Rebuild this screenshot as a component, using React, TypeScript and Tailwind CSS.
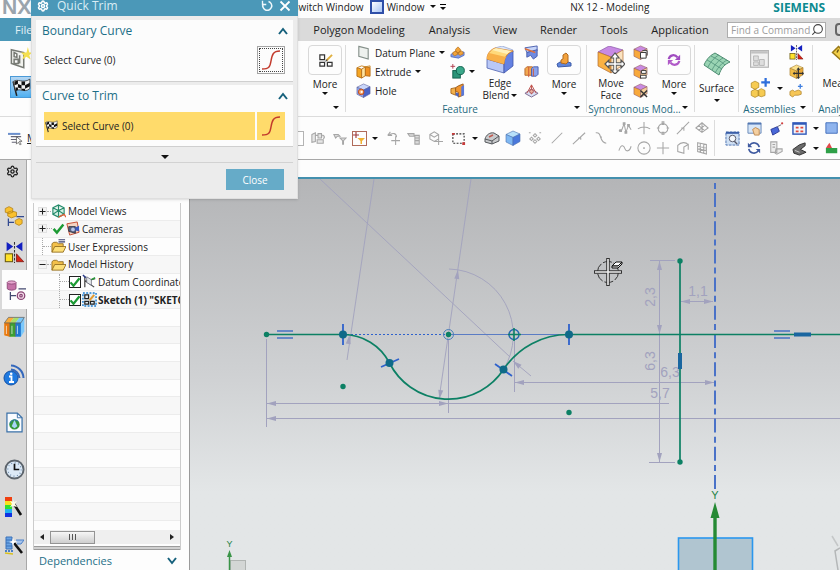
import React from "react";
import { Settings, Search } from "lucide-react";

type Kids = { children?: React.ReactNode };

const Ico = ({ s = "size-[15px]", children }: Kids & { s?: string }) => (
  <svg viewBox="0 0 16 16" className={`${s} shrink-0`} fill="none" aria-hidden="true">
    {children}
  </svg>
);

const Caret = ({ big = false }: { big?: boolean }) => (
  <svg viewBox="0 0 8 4" className={big ? "h-1 w-2 shrink-0" : "h-[3px] w-[6px] shrink-0"} aria-hidden="true">
    <path d="M0 0H8L4 4Z" fill="#111" />
  </svg>
);

const Cube = ({ top, left, right, line = "#5a5f9c" }: { top: string; left: string; right: string; line?: string }) => (
  <g stroke={line} strokeWidth=".6" strokeLinejoin="round">
    <path d="M1 4.500 8 1 15 4 8 7.500Z" fill={top} />
    <path d="M1 4.500 8 7.500V15.500L1 12Z" fill={left} />
    <path d="M8 7.500 15 4V11.500L8 15.500Z" fill={right} />
  </g>
);

/* ---------- ribbon icons ---------- */

const MoreSketchIcon = () => (
  <Ico s="size-[15px]">
    <path d="M2 2H7V7H2ZM2 10H7V14H2ZM10 10H15V14H10Z" stroke="#333" strokeWidth="1.300" />
    <path d="M9 8 15 2" stroke="#e0b040" strokeWidth="2" />
    <path d="M8 9 10 7" stroke="#444" strokeWidth="1.200" />
  </Ico>
);
const DatumPlaneIcon = () => (
  <Ico>
    <path d="M3 1.500 13 4V15L3 12Z" fill="#eef1ee" stroke="#85908a" strokeWidth="1.200" />
  </Ico>
);
const ExtrudeIcon = () => (
  <Ico>
    <path d="M1 4 6 5.500V15L1 13Z" fill="#f5a623" stroke="#b8701a" />
    <path d="M6 5.500 10 3V12.500L6 15Z" fill="#fde3a0" stroke="#b8701a" />
    <path d="M10 3 15 4V13L10 12.500Z" fill="#f09020" stroke="#b8701a" />
    <path d="M1 4 6 2 10 3 15 2V4" stroke="#c98320" />
  </Ico>
);
const HoleIcon = () => (
  <Ico>
    <Cube top="#c9d6fa" left="#8fa8ee" right="#4a64c8" />
    <circle cx="5.500" cy="9.500" r="3" fill="#f0a060" stroke="#c04a20" />
    <circle cx="6" cy="9.500" r="1.200" fill="#fff" />
  </Ico>
);
const PatternIcon = () => (
  <Ico>
    <path d="M1 10 6 7 15 7.500V11L9 14 1 12.500Z" fill="#7f9ae8" stroke="#4560b8" strokeWidth=".8" />
    <path d="M3 8 6 6.500 8 8V10L5 11.500 3 10ZM9 8 12 6 14 8V9.500L11 11 9 10ZM6 4.500 8.500 2 11 4.500V7L8.500 8.500 6 7Z" fill="#f2a43a" stroke="#b87420" strokeWidth=".8" />
  </Ico>
);
const UniteIcon = () => (
  <Ico>
    <path d="M3 0V5M.5 2.500H5.500" stroke="#b04050" />
    <rect x="3" y="7" width="8" height="8" fill="#2a9478" stroke="#0f5f4c" />
    <circle cx="11" cy="7" r="4.300" fill="#3aa88a" stroke="#0f5f4c" />
  </Ico>
);
const ShellIcon = () => (
  <Ico>
    <path d="M1 6 6 5V13L1 11Z" fill="#f2b04a" stroke="#a86a20" />
    <path d="M6 5 9 3 14 1V13L9 15V10L6 9Z" fill="#f0952e" stroke="#9a5d20" />
    <path d="M12 4 15 2V13L12 14Z" fill="#5a78d8" />
    <path d="M6 10 9 11V15L6 13Z" fill="#4a64c0" />
  </Ico>
);
const EdgeBlendIcon = () => (
  <svg viewBox="0 0 28 28" className="size-7" aria-hidden="true">
    <path d="M9 2 16 0 27 4V6L20 9Z" fill="#dce8fc" stroke="#7d8fc4" strokeWidth=".6" />
    <path d="M1 13 18 18V27L1 22Z" fill="#b9c8f7" stroke="#4e62b0" strokeWidth=".8" />
    <path d="M18 18C18 12 21 7 27 5V20L18 27Z" fill="#6481e2" stroke="#4156a8" strokeWidth=".8" />
    <path d="M1 13C1 8 4 4 9 2L27 5C21 7 18 12 18 18Z" fill="#ffd97a" stroke="#d8812a" strokeWidth=".9" />
    <path d="M1 13C1 11 2 8 3 7L20 11C19 13 18 15 18 18Z" fill="#f8b048" />
    <path d="M10 2 26 5C24 6 22 7 21 8L6 4Z" fill="#fff0b8" />
  </svg>
);
const ChamferIcon = () => (
  <Ico>
    <path d="M1 3 14 1V6L3 8Z" fill="#c8d6fa" stroke="#4a5fae" />
    <path d="M3 8 14 5V12L10 15 7 11 3 13Z" fill="#6f8ae0" stroke="#4a5fae" />
    <path d="M1 4 12 8" stroke="#e0703a" strokeWidth="1.500" />
  </Ico>
);
const TrimBodyIcon = () => (
  <Ico>
    <path d="M1 5 3 3H9V12H1Z" fill="#f2a850" stroke="#b86a30" />
    <path d="M8 5 10 3H15V11L13 13H8Z" fill="#89a2ec" stroke="#4a5fae" />
    <path d="M5 3V14M10 5V13" stroke="#d05a3a" />
  </Ico>
);
const DraftIcon = () => (
  <Ico>
    <path d="M1 11 8 6 15 11 8 15Z" fill="#d8dff5" stroke="#7a6a90" />
    <path d="M8 2V12M8 2 3 11M8 2 13 11" stroke="#c0504a" />
    <circle cx="8" cy="9" r="2" fill="#e8b0a0" stroke="#b05050" />
  </Ico>
);
const FeatureMoreIcon = () => (
  <Ico s="size-4">
    <path d="M1 12 4 10H12L15 11V14L2 15Z" fill="#5f86dc" stroke="#3f5ca8" />
    <path d="M5 11V8L7 7V3L10 1 12 3V10L10 12Z" fill="#f3a23c" stroke="#b06a20" />
  </Ico>
);
const MoveFaceIcon = () => (
  <svg viewBox="0 0 28 28" className="size-7" aria-hidden="true">
    <g stroke="#b06a30" strokeWidth=".7">
      <path d="M1 6 12 0 26 4 14 11Z" fill="#c88ae4" stroke="#8a58a8" />
      <path d="M1 6 14 11V27L1 20Z" fill="#f9b143" />
      <path d="M14 11 26 4V19L14 27Z" fill="#fbe3c0" />
    </g>
    <path d="M18 10V26M10 18H26" stroke="#555" strokeWidth="3.400" />
    <path d="M18 7 14 12H22ZM18 28 14 24H22ZM8 18 12 14V22ZM28 18 24 14V22Z" fill="#fff" stroke="#555" strokeWidth="1.200" />
    <path d="M18 11V25M11 18H25" stroke="#fff" strokeWidth="1.600" />
  </svg>
);
const SyncCube = ({ children }: Kids) => (
  <Ico>
    <Cube top="#c98ae0" left="#f8a93c" right="#f6cf9c" line="#8f5a60" />
    {children}
  </Ico>
);
const RefreshIcon = () => (
  <Ico s="size-[14px]">
    <path d="M2 7C3 2 9 1 12 5" stroke="#a04cc0" strokeWidth="2.600" />
    <path d="M15 2V8H9Z" fill="#a04cc0" />
    <path d="M14 9C13 14 7 15 4 11" stroke="#b05ac8" strokeWidth="2.600" />
    <path d="M1 14V8H7Z" fill="#b05ac8" />
  </Ico>
);
const SurfaceIcon = () => (
  <svg viewBox="0 0 28 24" className="h-6 w-7" fill="none" aria-hidden="true">
    <path d="M1 13C4 6 8 3 12 1L27 10C22 12 18 16 16 23 11 20 6 16 1 13Z" fill="#9ad4b4" stroke="#4c8a70" />
    <path d="M4 8C10 11 15 15 19 17M8 4C14 7 19 10 22 13M5 15C8 9 12 5 16 3M9 18C12 12 16 8 20 6M12 21C16 14 19 11 24 8" stroke="#4f9078" strokeWidth=".8" />
  </svg>
);
const AsmWindowIcon = () => (
  <Ico s="size-[19px]">
    <rect x=".5" y=".5" width="15" height="14" fill="#f1f1f1" stroke="#b5b5b5" />
    <path d="M1 2H15" stroke="#c2c2c2" strokeWidth="2" />
    <path d="M3 5H7V9H3ZM3 10H7V13H3ZM8 8H12V13H8Z" fill="#dedede" stroke="#b0b0b0" strokeWidth=".7" />
  </Ico>
);
const AsmAddIcon = () => (
  <Ico s="size-5">
    <path d="M1 4 4 2.500 7 4V7.500L4 9 1 7.500ZM1 10.500 4 9 7 10.500V14L4 15.500 1 14ZM6.500 10 9 8.500 12 10V14L9 15 6.500 14Z" fill="#f6cb52" stroke="#b08a28" strokeWidth=".6" />
    <path d="M12.500 0V7M9 3.500H16" stroke="#2f6fdc" strokeWidth="1.800" />
  </Ico>
);
const MirrorAsmIcon = ({ s = "size-[15px]" }: { s?: string }) => (
  <Ico s={s}>
    <path d="M2 0 7 3.500 2 7ZM14 0 9 3.500 14 7Z" fill="#1420c0" />
    <path d="M8 0V16" stroke="#333" strokeWidth=".8" strokeDasharray="2 1" />
    <rect x="1" y="9" width="5.500" height="6" fill="#ffe22a" stroke="#6a5a10" strokeWidth=".8" />
    <path d="M9.500 9 15 15H9.500Z" fill="#d82414" stroke="#7a1410" strokeWidth=".6" />
  </Ico>
);
const MoveCompIcon = () => (
  <Ico>
    <Cube top="#fbe08a" left="#f3bd48" right="#e8a83a" line="#a0782a" />
    <path d="M10 5V15M5 10H15" stroke="#333" strokeWidth="1.300" />
    <path d="M10 3.500 8 6H12ZM10 16 8 14H12ZM4 10 6 8V12ZM16 10 14 8V12Z" fill="#333" />
  </Ico>
);
const PatternCompIcon = () => (
  <Ico>
    <path d="M1 9 4 7.500 6 9 10 7.500 13 9V12L10 13 6 13 4 15 1 13Z" fill="#f6c656" stroke="#b08630" strokeWidth=".8" />
    <path d="M12 1V6M9.500 3.500H14.500" stroke="#3f7fe0" strokeWidth="1.400" />
  </Ico>
);
const MeasureIcon = () => (
  <Ico s="size-6">
    <path d="M1 5 5 1 16 11 12 15Z" fill="#f2cf4a" stroke="#9a7a18" />
    <path d="M5 3 4 5M8 5.500 6.500 7M11 8 9.500 10" stroke="#6a5410" />
  </Ico>
);

/* ---------- navigator icons ---------- */

const FolderIcon = ({ eq = false }: { eq?: boolean }) => (
  <Ico>
    <path d="M1 14V5L3 3.500H6L8 5H13V8" fill="#f3c04a" stroke="#8e6a1c" strokeWidth=".9" />
    <path d="M1 14 4 8H16L13 14Z" fill="#fddf78" stroke="#8e6a1c" strokeWidth=".9" />
    {eq && <path d="M8 .8H15M8 3H15" stroke="#3a3f6c" strokeWidth="1.200" />}
  </Ico>
);
const ViewsIcon = () => (
  <Ico>
    <path d="M2 4 8 1 14 4V11L8 14 2 11ZM2 4 8 7 14 4M8 7V14M2 11 8 7 14 11M8 1V7" stroke="#238a6a" strokeWidth="1.200" fill="#d6efe4" />
    <path d="M8 14 14 11 16 14" stroke="#e0603a" strokeWidth="1.400" />
  </Ico>
);
const CameraIcon = () => (
  <Ico>
    <path d="M2 3 13 1 15 12 5 15Z" fill="#f4d4c4" stroke="#c44a30" />
    <path d="M4 6H11V13L4 11Z" fill="#5a6480" stroke="#30364a" />
    <circle cx="8.500" cy="9" r="2" fill="#b8c4e8" />
    <path d="M11 7 15 5V11L11 10Z" fill="#3a58c0" />
  </Ico>
);
const CheckIcon = ({ s = "size-[13px]" }: { s?: string }) => (
  <Ico s={s}>
    <path d="M2 8.500 6 13 14 3" stroke="#1c9a34" strokeWidth="3" />
  </Ico>
);
const CsysIcon = () => (
  <Ico>
    <path d="M3 14V2M3 7 13 14M3 8 14 5" stroke="#444" strokeWidth="1.300" />
    <path d="M5 3 10 6V12L5 9Z" fill="#e6eaec" stroke="#667" strokeWidth=".8" />
    <path d="M10 6 14 4" stroke="#2a9a3a" strokeWidth="1.600" />
    <path d="M1 1 4 4" stroke="#2a3a88" strokeWidth="1.600" />
  </Ico>
);
const SketchIcon = () => (
  <Ico>
    <rect x="1" y="1" width="14" height="14" stroke="#1f7fd0" strokeWidth="1.600" strokeDasharray="2 1.500" fill="#e4eef6" />
    <path d="M3 3H7V7H3ZM3 10H7V13H3ZM9 10H13V13H9Z" stroke="#222" strokeWidth="1.300" />
    <path d="M8 9 13 3" stroke="#e29a30" strokeWidth="2.200" />
  </Ico>
);

/* ---------- resource bar icons ---------- */

const AsmNavIcon = () => (
  <Ico s="size-5">
    <path d="M1 2 4 .5 7 2V5L4 6 1 5ZM3 5 6 4 10 5V8L6 9.500 3 8Z" fill="#f9c02e" stroke="#b07f14" strokeWidth=".6" />
    <path d="M10 8.500H16M3.500 10V16M3.500 13H8" stroke="#334a90" />
    <path d="M9 11.500 12 10 14.500 11V14L12 15.500 9 14Z" fill="#f9c02e" stroke="#b07f14" strokeWidth=".6" />
  </Ico>
);
const PartNavIcon = () => (
  <Ico s="size-5">
    <path d="M1 2V7C2 8.500 7 8.500 8 7V2" fill="#c673a8" stroke="#8a4474" strokeWidth=".7" />
    <ellipse cx="4.500" cy="2" rx="3.500" ry="1.300" fill="#e8a8d0" stroke="#8a4474" strokeWidth=".7" />
    <path d="M10 7H16M3.500 9.500V16M3.500 12.500H8" stroke="#444a70" />
    <circle cx="12" cy="12.500" r="3" fill="#f2dbe8" stroke="#8a4474" />
    <circle cx="12" cy="12.500" r="1" stroke="#8a4474" />
  </Ico>
);
const BooksIcon = () => (
  <Ico s="size-[22px]">
    <path d="M1 5 4 1H8L5 5V15L1 14Z" fill="#f9ac3a" />
    <path d="M1 5H5V15L1 14Z" fill="#e87810" />
    <path d="M5 5 8 1H12L9 5V15H5Z" fill="#a8de6a" />
    <path d="M5 5H9V15H5Z" fill="#3ca030" />
    <path d="M9 5 12 1H15.500V11L13 15H9Z" fill="#7cc8fa" />
    <path d="M9 5H13V15H9Z" fill="#1f78d0" />
    <path d="M2.500 7V13M6.500 7V13M10.500 7V13" stroke="#fff" strokeWidth=".8" opacity=".6" />
    <path d="M1 5 4 1H15.500L13 5ZM5 5V15M9 5V15" stroke="#5a5a5a" strokeWidth=".5" />
  </Ico>
);
const InfoIcon = () => (
  <svg viewBox="0 0 22 22" className="size-[22px]" fill="none" aria-hidden="true">
    <path d="M8 5.500A9 9 0 0 1 16.500 14M8 1.500A13 13 0 0 1 20.500 14" stroke="#3468bc" strokeWidth="2" />
    <circle cx="8" cy="14" r="7" fill="#1f7ae0" stroke="#1450a4" />
    <path d="M6 12.500H8.500V17.500M6 18H11" stroke="#fff" strokeWidth="1.800" />
    <circle cx="8.200" cy="9.700" r="1.300" fill="#fff" />
  </svg>
);
const DocIcon = () => (
  <svg viewBox="0 0 18 22" className="h-[21px] w-[17px]" fill="none" aria-hidden="true">
    <path d="M1 1H12L17 6V21H1Z" fill="#fafcff" stroke="#3a70a8" strokeWidth="1.300" />
    <path d="M12 1V6H17" stroke="#3a70a8" />
    <circle cx="9" cy="13" r="5.500" fill="#35983c" />
    <path d="M9 8 12 15 9 17 6 15Z" fill="#a8d4f6" />
    <path d="M4 12C6 8 10 7 13 10" stroke="#2b6cc0" />
  </svg>
);
const ClockIcon = () => (
  <svg viewBox="0 0 22 22" className="size-[21px]" fill="none" aria-hidden="true">
    <circle cx="11" cy="11" r="9.500" fill="#dce9f6" stroke="#5c646c" strokeWidth="2" />
    <circle cx="11" cy="11" r="7" stroke="#6a88a8" strokeWidth="1.200" strokeDasharray="1 2.660" />
    <path d="M11 5V11H16" stroke="#111" strokeWidth="1.800" />
  </svg>
);
const RolesIcon = () => (
  <svg viewBox="0 0 20 20" className="size-5" fill="none" aria-hidden="true">
    <path d="M1 0H8V4H1Z" fill="#f04010" />
    <path d="M1 4H8V8H1Z" fill="#f8e020" />
    <path d="M1 8H8V12H1Z" fill="#30e030" />
    <path d="M1 12H8V16H1Z" fill="#20b0f0" />
    <path d="M1 16H8V20H1Z" fill="#1030e0" />
    <path d="M10 7 17 18" stroke="#111" strokeWidth="2.600" />
    <path d="M9 2 10 5 13 4 11 7 13 10 9 9 6 10 8 7 6 4 9 5Z" fill="#fffde8" />
  </svg>
);
const SceneIcon = () => (
  <svg viewBox="0 0 20 20" className="size-5" fill="none" aria-hidden="true">
    <path d="M2 2H8V14H2ZM2 5H8M2 8H8M2 11H8" fill="#6aa4e4" stroke="#3a70b8" />
    <path d="M1 16H10" stroke="#4a80c8" strokeWidth="2" strokeDasharray="2 1" />
    <path d="M12 5H20L17 9H13" fill="#a8c4ec" stroke="#4a80c8" />
    <path d="M1 18 9 19" stroke="#d8c020" strokeWidth="1.500" />
    <path d="M10 8 18 18" stroke="#111" strokeWidth="2.600" />
    <path d="M9 3 10 6 13 6 10 8 9 11 8 8 5 7 8 6Z" fill="#fff" />
  </svg>
);

/* ---------- ribbon parts ---------- */

const Tool = ({ icon, label, caret = false, name }: { icon: React.ReactNode; label?: string; caret?: boolean; name?: string }) => (
  <button aria-label={label ?? name} className="flex h-[19px] items-center gap-1 whitespace-nowrap">
    {icon}
    {label && <span>{label}</span>}
    {caret && <Caret />}
  </button>
);

const More = ({ icon }: { icon: React.ReactNode }) => (
  <button className="flex w-[34px] shrink-0 flex-col items-center pt-1">
    <span className="flex h-[30px] w-full items-center justify-center rounded-sm border border-[#d9d9d9] bg-[#fdfdfd]">{icon}</span>
    <span className="mt-px leading-4">More</span>
    <Caret />
  </button>
);

const Big = ({ icon, a, b, caret = false }: { icon: React.ReactNode; a: string; b: string; caret?: boolean }) => (
  <button className="flex w-10 shrink-0 flex-col items-center pt-[5px] leading-[12px]">
    {icon}
    <span className="mt-[3px]">{a}</span>
    <span className="flex items-center gap-0.5 whitespace-nowrap">{b}{caret && <Caret />}</span>
  </button>
);

const Group = ({ w, title, caret = true, children }: Kids & { w: string; title?: string; caret?: boolean }) => (
  <section className={`${w} flex shrink-0 flex-col`}>
    <div className="flex h-[62px]">{children}</div>
    <div className="flex h-[14px] items-center pr-1.5">
      <h2 className="flex-1 whitespace-nowrap text-center text-[#1f6a80]">{title}</h2>
      {caret && <span className="pb-1"><Caret /></span>}
    </div>
  </section>
);

const Sep = () => <div className="my-1 w-px shrink-0 bg-[#dcdcdc]" />;

/* ---------- selection bar ---------- */

const Cell = ({ w = "w-[22px]", name, children }: Kids & { w?: string; name: string }) => (
  <button aria-label={name} className={`${w} flex h-5 shrink-0 items-center justify-center`}>{children}</button>
);

const g = "#a6a6a6";
const Line = ({ d, fill = "none" }: { d: string; fill?: string }) => (
  <Ico s="size-[14px]"><path d={d} stroke={g} strokeWidth="1.200" fill={fill} /></Ico>
);

const snapIcons: [string, string][] = [
  ["Control point", "M1 11H4L7 3 9 13 12 5 15 10M2 10H4V12H2ZM6 2H8V4H6ZM8 12H10V14H8ZM11 4H13V6H11Z"],
  ["Intersection", "M1 9C5 6 11 6 15 9M8 1V15"],
  ["Quadrant", "M8 3A5.500 5.500 0 1 0 8 14A5.500 5.500 0 1 0 8 3M7 1H9V4H7ZM7 13H9V16H7ZM1 8H4M12 8H15"],
  ["Point on curve", "M1 15 15 1M6 8H9V11"],
  ["Point on surface", "M1 8 8 2 15 8 8 13ZM4 5 11 11M8 2V13M11 5 4 11"],
  ["Spline", "M1 11C4 2 7 6 8 9S13 13 15 6"],
  ["Arc center", "M8 1A7 7 0 1 0 8 15A7 7 0 1 0 8 1M7 8H9M8 7V9"],
  ["Existing point", "M8 1V15M1 8H15"],
  ["Face", "M2 5C6 1 11 1 14 4L9 7V14L2 12ZM9 7 14 4V10"],
  ["Grid", "M3 2 13 4V15L3 12ZM6 3V13M10 3V14M3 6 13 8M3 9 13 11"],
];

const SelectionBar = () => (
  <div className="flex h-[43px] shrink-0 items-center overflow-hidden border-b border-[#a8a8a8] bg-[#fdfdfd]">
    <div className="flex w-[304px] shrink-0 items-center pl-2">
      <button className="flex items-center gap-1">
        <Ico>
          <path d="M0 3H13M3 6H14M3 9H12M4 12H10" stroke="#667" strokeWidth="1.200" />
          <path d="M0 3H13" stroke="#6a90d0" strokeWidth="2" />
          <path d="M9 6V14L11 12 13 15 14 14 12 11H15Z" fill="#fff" stroke="#555" strokeWidth=".8" />
        </Ico>
        <span className="underline">Menu</span>
      </button>
      <select aria-label="Selection scope" className="ml-auto h-[15px] w-40 appearance-none border border-[#b4b4b4] bg-white">
        <option></option>
      </select>
    </div>
    <div className="ml-[3px] flex items-center">
      <Cell name="Highlight">
        <Line d="M1 4 5 2V12L1 13ZM5 5H8M8 3H12V8H8ZM7 10H14V14H7ZM12 5A2 2 0 1 1 14 9" fill="#e6e6e6" />
      </Cell>
      <Cell name="Reset filters"><Line d="M1 4H6L8 6H5L3 8ZM8 8H15L12 11V15H11V11Z" fill="#dcdcdc" /></Cell>
      <Cell name="Snap filter" w="w-4">
        <span className="flex size-[15px] items-center justify-center border border-[#b06a5a]">
          <Ico s="size-3">
            <path d="M4 0V8M0 4H8" stroke="#a03a3a" strokeWidth="1.500" />
            <path d="M6 8H16L12 12V16H10V12Z" fill="#f0b030" />
          </Ico>
        </span>
      </Cell>
      <Cell name="Filter options" w="w-4"><Caret /></Cell>
      <Cell name="Undo selection" w="w-5"><Line d="M2 5 5 1M2 5H7M3 5C8 1 12 3 12 7M11 6V16M6 11H16" /></Cell>
      <Cell name="Chain"><Line d="M1 3H8V6H3ZM9 5H14V15H9ZM9 8H14M9 11H14" fill="#ddd" /></Cell>
      <Cell name="Body target"><Line d="M1 4 6 1 11 4V9L6 12 1 9ZM1 4 6 7 11 4M11 8V16M7 12H16" /></Cell>
      <Cell name="Rectangle select">
        <Ico>
          <rect x="2" y="3" width="12" height="10" stroke="#333" strokeDasharray="2 1.500" strokeWidth="1.200" />
          <path d="M1 2H4V4H1ZM12 12H15V15H12Z" fill="#c83a3a" />
        </Ico>
      </Cell>
      <Cell name="Selection shape" w="w-3"><Caret /></Cell>
      <Cell name="Face rule" w="w-[21px]">
        <Ico s="size-4">
          <path d="M1 9C2 5 6 2 10 3L15 6V11L8 14 1 12Z" fill="#c8cacc" stroke="#55585c" />
          <path d="M1 9 8 11 15 6M8 11V14" stroke="#55585c" />
          <path d="M5 7 9 5" stroke="#c05a50" strokeWidth="1.500" />
        </Ico>
      </Cell>
      <Cell name="Solid body"><Ico s="size-4"><Cube top="#b8e0fa" left="#7fb8f2" right="#4a78dc" line="#4a70b0" /></Ico></Cell>
      <Cell name="Points"><Line d="M8 3 10 5 8 7 6 5ZM4 7 6 9 4 11 2 9ZM12 7 14 9 12 11 10 9ZM8 10 10 12 8 14 6 12ZM1 2H3M13 2H15" /></Cell>
      <Cell name="Line"><Line d="M2 14 14 2" /></Cell>
      <Cell name="Midpoint"><Line d="M1 15 15 2M7 8H10V10" /></Cell>
      <Cell name="Tangent"><Line d="M2 2C10 1 5 13 14 14M7 7H9" /></Cell>
    </div>
    <div className="ml-0.5 grid grid-cols-5">
      {snapIcons.map(([n, d]) => (
        <Cell key={n} name={n}><Line d={d} /></Cell>
      ))}
    </div>
    <div className="ml-1 h-9 w-px bg-[#dcdcdc]" />
    <div className="ml-1.5 flex items-center">
      <Cell name="Fit view">
        <Ico s="size-[15px]">
          <rect x="1" y="1" width="14" height="14" fill="#cfe0f4" stroke="#4a70b0" strokeDasharray="3 1" />
          <path d="M1 2H15" stroke="#3a5ea8" strokeWidth="2" />
          <circle cx="8" cy="8" r="3.500" fill="#f4f8fc" stroke="#556" />
          <path d="M10 11 13 14" stroke="#556" strokeWidth="1.500" />
        </Ico>
      </Cell>
      <div className="grid grid-cols-[22px_22px_24px_10px]">
        <Cell name="Pan">
          <Ico>
            <path d="M1 2H15V13H1Z" fill="#d6e6f8" stroke="#6888b8" />
            <path d="M1 3H15" stroke="#4a70b0" strokeWidth="1.500" />
            <path d="M6 9 9 7 13 9V15H8Z" fill="#f4cfa0" stroke="#c08a50" />
          </Ico>
        </Cell>
        <Cell name="Zoom">
          <Ico>
            <path d="M2 9 9 6 11 11 4 15Z" fill="#4a68d8" stroke="#2a3a98" />
            <path d="M9 6 13 4" stroke="#667" />
            <circle cx="14" cy="2.500" r="1.200" fill="#d04040" />
          </Ico>
        </Cell>
        <Cell name="Full screen" w="w-6">
          <Ico>
            <rect x="1" y="2" width="14" height="12" fill="#f0f4fc" stroke="#2f58b8" strokeWidth="1.500" />
            <path d="M1 3H15" stroke="#2f58b8" strokeWidth="2" />
            <path d="M4 6H7V8H4ZM9 6H12V8H9ZM4 10H7V12H4ZM9 10H12V12H9Z" fill="#e04a3a" />
          </Ico>
        </Cell>
        <Cell name="Full screen options" w="w-[10px]"><Caret /></Cell>
        <Cell name="Rotate">
          <Ico s="size-[14px]">
            <path d="M14 7A6 6 0 0 0 3 5M2 9A6 6 0 0 0 13 11" stroke="#3f5aa0" strokeWidth="1.800" />
            <path d="M1 2V7H6ZM15 14V9H10Z" fill="#3f5aa0" />
          </Ico>
        </Cell>
        <Cell name="View list"><Line d="M2 1H9V13H2ZM4 4H7M4 7H7M8 9H15V12L9 15 7 14Z" fill="#ececec" /></Cell>
        <Cell name="Render style" w="w-6">
          <Ico>
            <path d="M1 9 8 4 14 2V5L9 9 15 12 8 15 2 13Z" fill="#6b6b6b" stroke="#2e2e2e" />
            <path d="M3 10 8 12" stroke="#ccc" />
          </Ico>
        </Cell>
        <Cell name="Render options" w="w-[10px]"><Caret /></Cell>
      </div>
      <div className="ml-[3px] flex flex-col">
        <Cell name="Section" w="w-4"><Ico s="size-[14px]"><path d="M1 2H14V14H1Z" fill="#8fb4ee" stroke="#3a68b8" /></Ico></Cell>
        <Cell name="Layer" w="w-4"><Ico s="size-[14px]"><path d="M1 8 5 2 8 8Z" fill="#e04a4a" /><path d="M1 8H14V14H1Z" fill="#2fa048" /></Ico></Cell>
      </div>
    </div>
  </div>
);

/* ---------- sketch canvas ---------- */

const dim = "#a2a2be";
const green = "#0c8064";
const blue = "#2f62cc";

const Arrow = ({ x, y, a }: { x: number; y: number; a: number }) => (
  <path d="M0 0 -9 2.500V-2.500Z" fill={dim} transform={`translate(${x} ${y}) rotate(${a})`} />
);

const Sketch = () => (
  <svg viewBox="190 179 650 391" preserveAspectRatio="xMinYMin slice" className="block size-full" fill="none" role="img" aria-label="Sketch geometry">
    <g stroke={dim} strokeWidth="1">
      <path d="M374 179 347 360M471 179 439 399M320 179 510 357M513 361 531 376" opacity=".9" />
      <path d="M449 269A66 66 0 0 1 503.500 369.500" opacity=".9" />
      <path d="M266.500 339V427M448.500 339V413M514.500 340V392M267 403.500H669M267 418.500H840M515 382.500H714M681 301.500H713" />
      <path d="M659.500 261V462M650 260.500H675M649 462.500H675" />
    </g>
    <Arrow x={349.5} y={335} a={-82} />
    <Arrow x={458} y={270} a={-82} />
    <Arrow x={439.5} y={399} a={98} />
    <Arrow x={513} y={361} a={220} />
    <Arrow x={267} y={403.5} a={180} />
    <Arrow x={448} y={403.5} a={0} />
    <Arrow x={267} y={418.5} a={180} />
    <Arrow x={515} y={382.5} a={180} />
    <Arrow x={714} y={382.5} a={0} />
    <Arrow x={681} y={301.5} a={180} />
    <Arrow x={713} y={301.5} a={0} />
    <Arrow x={659.5} y={261} a={-90} />
    <Arrow x={659.5} y={334} a={90} />
    <Arrow x={659.5} y={462} a={90} />
    <g fill={dim} fontFamily="Liberation Sans, Arial, sans-serif" fontSize="14" textAnchor="middle">
      <text x="698" y="296">1,1</text>
      <text x="670" y="377">6,3</text>
      <text x="660" y="398">5,7</text>
      <text transform="translate(655 297) rotate(-90)">2,3</text>
      <text transform="translate(655 361) rotate(-90)">6,3</text>
    </g>

    <path d="M715 489V179" stroke="#4a72c8" strokeWidth="2" strokeDasharray="14 4 6 4.200" />
    <path d="M343 334.500H448" stroke={blue} strokeDasharray="2 2" />
    <path d="M448 334.500H569" stroke="#5a7cc4" />
    <g stroke={green} strokeWidth="1.700">
      <path d="M266 334.500H343A52 52 0 0 1 389.500 363A66 66 0 0 0 503.500 369.500A78 78 0 0 1 569 334.500H840" />
      <path d="M680 261V462" />
    </g>
    <path d="M277 331H293M277 338H293M774 331H790M774 338H790" stroke="#4672c4" strokeWidth="1.600" />
    <path d="M794 334.500H811M680 353V369" stroke="#1a66a0" strokeWidth="4" />
    <path d="M343 324V345M569 324V345M381 367 399 359M495 364 512 376" stroke={blue} strokeWidth="1.800" />
    <g fill="#0f6a88">
      <circle cx="343" cy="334.500" r="4" />
      <circle cx="569" cy="334.500" r="4" />
      <circle cx="389.500" cy="363" r="4" />
      <circle cx="503.500" cy="369.500" r="4" />
    </g>
    <g fill={green}>
      <circle cx="266.500" cy="334.500" r="2.700" />
      <circle cx="343" cy="386.500" r="2.700" />
      <circle cx="569" cy="412.500" r="2.700" />
      <circle cx="680" cy="261" r="2.700" />
      <circle cx="680" cy="462" r="2.700" />
      <circle cx="448.500" cy="334.500" r="2.700" />
    </g>
    <circle cx="448.500" cy="334.500" r="5" stroke="#4a80b8" />
    <circle cx="514" cy="334.500" r="5" stroke="#2468b0" strokeWidth="1.400" />
    <path d="M508 334.500H521M514 328V341" stroke={green} strokeWidth="1.600" />

    <g>
      <circle cx="608" cy="272" r="10.500" stroke="#333" strokeDasharray="9 2" />
      <path d="M608 258V286M594 272H622" stroke="#333" strokeWidth="3.600" />
      <path d="M608 259V285M595 272H621" stroke="#eee" strokeWidth="1.600" />
      <path d="M612 266 616 262 622 262 618 266Z" fill="#fff" stroke="#111" />
      <path d="M612 266H618L622 262V264L618 268H612Z" fill="#ddd" stroke="#111" />
    </g>

    <rect x="678.500" y="538" width="74" height="50" fill="#b0c5d0" stroke="#2a97ee" strokeWidth="1.600" />
    <path d="M715 512V570" stroke="#258a34" strokeWidth="3.400" />
    <path d="M715 502 719.500 518H710.500Z" fill="#258a34" />
    <g fill="#1e8244" fontFamily="Liberation Sans, Arial, sans-serif" textAnchor="middle">
      <text x="715" y="499" fontSize="11">Y</text>
      <text x="229.500" y="547" fontSize="9">Y</text>
    </g>
    <rect x="230.500" y="560.500" width="15" height="15" fill="#d3d6d5" stroke="#b0b4b2" />
    <path d="M229.500 570V555" stroke="#3a9448" strokeWidth="1.500" />
    <path d="M229.500 550 232 557H227Z" fill="#3a9448" />
    <path d="M832 536 838 546" stroke="#c4c7c8" strokeWidth="1.500" />
    <path d="M840 548 835 551 838 570" stroke="#b4b7b8" strokeWidth="1.500" />
  </svg>
);

/* ---------- dialog ---------- */

const Chevron = ({ down = false }: { down?: boolean }) => (
  <svg viewBox="0 0 10 8" className={down ? "h-2 w-[10px] rotate-180" : "h-2 w-[10px]"} fill="none" aria-hidden="true">
    <path d="M1 7 5 2 9 7" stroke="#15607c" strokeWidth="2" />
  </svg>
);
const CurveGlyph = () => (
  <svg viewBox="0 0 20 20" className="size-5" fill="none" aria-hidden="true">
    <path d="M1 19C8 19 9 17 10 11S12 1 19 1" stroke="#c23a2c" strokeWidth="1.500" />
  </svg>
);
const FlagIcon = ({ s }: { s: string }) => (
  <Ico s={s}>
    <path d="M1 3 4 15" stroke="#222" strokeWidth="1.300" />
    <path d="M1 3C5 0 9 5 15 1V9C10 13 7 8 3 11Z" fill="#f4f4f4" stroke="#222" strokeWidth=".6" />
    <path d="M2 3 5 2V5L2 6ZM8 3 11 3V6L8 6ZM5 5 8 6V9L5 8ZM11 6 15 4V7L11 9ZM3 8 5 8V10L3 11ZM8 9 11 9V11L8 10Z" fill="#111" />
  </Ico>
);

const Dialog = () => (
  <div role="dialog" aria-label="Quick Trim" className="absolute left-[31px] top-0 flex w-[267px] flex-col border-x border-b border-[#dfdfdf] bg-[#ececec] shadow">
    <header className="-mx-px flex h-4 items-start bg-[#4b98b8] pl-1.5 pr-[7px] text-[#d9edf5]">
      <Settings className="size-3 text-white" strokeWidth={3} />
      <h1 className="-mt-0.5 ml-2 flex-1 text-xs leading-4">Quick Trim</h1>
      <button aria-label="Reset" className="mr-1.5">
        <Ico s="size-3">
          <path d="M10 2A6 6 0 1 1 3 5" stroke="#eef7fb" strokeWidth="2" />
          <path d="M2 1V6H7" stroke="#eef7fb" strokeWidth="1.800" />
        </Ico>
      </button>
      <button aria-label="Close dialog">
        <Ico s="size-3"><path d="M2 2 14 14M14 2 2 14" stroke="#fff" strokeWidth="2.400" /></Ico>
      </button>
    </header>
    <div className="mt-1 flex flex-col gap-[3px] px-1">
      <section className="flex h-[62px] flex-col border-b border-[#cfcfcf] bg-[#fcfcfc] pl-1.5 pr-[5px]">
        <button className="flex h-[22px] items-center justify-between text-xs text-[#1d6f88]"><span>Boundary Curve</span><Chevron /></button>
        <div className="mt-1 flex h-7 items-center justify-between pl-0.5 pr-[3px]">
          <span id="boundary">Select Curve (0)</span>
          <button aria-labelledby="boundary" className="flex size-7 items-center justify-center border border-[#a5a5a5] p-px">
            <span className="flex size-6 items-center justify-center border border-dotted border-[#444]"><CurveGlyph /></span>
          </button>
        </div>
      </section>
      <section className="flex h-[62px] flex-col border-b border-[#cfcfcf] bg-[#fcfcfc] pl-1.5 pr-[5px]">
        <button className="flex h-[22px] items-center justify-between text-xs text-[#1d6f88]"><span>Curve to Trim</span><Chevron /></button>
        <div className="mt-[5px] flex h-7 items-stretch gap-0.5 pl-0.5 pr-[3px]">
          <span className="flex flex-1 items-center gap-1 bg-[#ffdb6b] pl-px"><FlagIcon s="size-[13px]" /><span id="trim">Select Curve (0)</span></span>
          <button aria-labelledby="trim" className="flex w-7 items-center justify-center bg-[#ffdb6b]"><CurveGlyph /></button>
        </div>
      </section>
    </div>
    <button aria-label="Show more" className="mx-1 flex h-4 items-center justify-center border-b border-[#d2d2d2] pt-1"><Caret big /></button>
    <div className="flex justify-end pb-2 pr-[13px] pt-1.5">
      <button className="h-[21px] w-[58px] bg-[#66abc8] text-white">Close</button>
    </div>
  </div>
);

/* ---------- navigator ---------- */

const Expander = ({ open = false }: { open?: boolean }) => (
  <button aria-label={open ? "Collapse" : "Expand"} className="flex size-[9px] shrink-0 items-center justify-center border border-[#e2e2e2] bg-[#f4f4f4]">
    <Ico s="size-[7px]"><path d={open ? "M1 8H15" : "M1 8H15M8 1V15"} stroke="#222" strokeWidth="2.400" /></Ico>
  </button>
);

const Dots = ({ w }: { w: string }) => <span className={`${w} shrink-0 border-t border-dotted border-[#aaa]`} />;

const Leaf = ({ icon, label, bold = false }: { icon: React.ReactNode; label: string; bold?: boolean }) => (
  <div className="flex items-center whitespace-nowrap pl-[25px]">
    <span className="h-full w-px shrink-0 border-l border-dotted border-[#aaa]" />
    <Dots w="w-[9px]" />
    <label className="flex items-center gap-px">
      <span className="grid">
        <input type="checkbox" defaultChecked className="col-start-1 row-start-1 size-[12px] appearance-none border border-[#222] bg-white" />
        <span className="pointer-events-none col-start-1 row-start-1 flex"><CheckIcon s="size-[12px]" /></span>
      </span>
      {icon}
      <span className={bold ? "font-bold" : ""}>{label}</span>
    </label>
  </div>
);

const treeRow = "flex items-center pl-1 whitespace-nowrap";
const treeLabel = "ml-0.5";

const Navigator = () => (
  <div className="flex w-[163px] shrink-0 flex-col border-r border-[#9a9a9a] bg-[#fdfdfd] pl-[6px] pr-2">
    <div className="mt-[43px] flex min-h-0 flex-1 flex-col border-x border-[#cccccc]">
      <div className="grid min-h-0 flex-1 auto-rows-fr overflow-hidden [&>*]:min-h-0 [&>*]:border-b [&>*]:border-[#ececec] [&>*:nth-child(even)]:bg-[#f7f7f7]">
        <div className={treeRow}><Expander /><Dots w="w-1" /><ViewsIcon /><span className={treeLabel}>Model Views</span></div>
        <div className={treeRow}><Expander /><Dots w="w-[5px]" /><CheckIcon /><CameraIcon /><span className={treeLabel}>Cameras</span></div>
        <div className={treeRow}><span className="ml-1 h-full w-px border-l border-dotted border-[#aaa]" /><Dots w="w-2" /><FolderIcon eq /><span className={treeLabel}>User Expressions</span></div>
        <div className={treeRow}><Expander open /><Dots w="w-1" /><FolderIcon /><span className={treeLabel}>Model History</span></div>
        <Leaf icon={<CsysIcon />} label="Datum Coordinate System" />
        <Leaf icon={<SketchIcon />} label={'Sketch (1) "SKETCH_000"'} bold />
        {Array.from({ length: 12 }, (_, i) => <div key={i} />)}
      </div>
      <div className="mt-[9px] flex h-[14px] shrink-0 items-center bg-[#efefef] px-1.5">
        <svg viewBox="0 0 4 6" className="h-1.5 w-1"><path d="M4 0V6L0 3Z" fill="#222" /></svg>
        <div className="ml-1.5 flex h-[13px] w-[45px] items-center justify-center gap-0.5 border border-[#949494] bg-linear-to-b from-[#f6f6f6] to-[#cfcfcf]">
          <i className="h-1.5 w-px bg-[#555]" />
          <i className="h-1.5 w-px bg-[#555]" />
          <i className="h-1.5 w-px bg-[#555]" />
        </div>
        <svg viewBox="0 0 4 6" className="ml-auto h-1.5 w-1"><path d="M0 0V6L4 3Z" fill="#222" /></svg>
      </div>
      <div className="mt-0.5 h-1 shrink-0 border-y border-[#9c9c9c] bg-[#d0d0d0]" />
    </div>
    <button className="flex h-5 shrink-0 items-center justify-between pl-1.5 pr-1 pt-0.5 text-[11px] text-[#1d6f88]">Dependencies<Chevron down /></button>
  </div>
);

const tabBtn = "shrink-0 text-center whitespace-nowrap";
const resBtn = "flex shrink-0 items-center justify-center pl-0.5";

export default function App() {
  return (
    <div className="relative flex h-screen flex-col overflow-hidden bg-[#fdfdfd] font-['Open_Sans','Noto_Sans',sans-serif] text-[10px] leading-[14px] text-[#222]">
      <div className="flex h-[18px] shrink-0 items-start overflow-hidden whitespace-nowrap">
        <div className="-mt-[3px] w-[293px] pl-0.5 font-['Liberation_Sans',sans-serif] text-[21px] font-bold leading-5 text-[#9aa4ac]">NX</div>
        <button className="h-[13px]">Switch Window</button>
        <button className="ml-1.5 flex h-[13px] items-center gap-[3px]">
          <span className="h-[14px] w-[14px] border-2 border-[#2f4fa8] bg-linear-to-br from-white to-[#a8c4f4]" />
          Window
          <span className="ml-[3px] flex"><Caret /></span>
        </button>
        <button aria-label="Customize" className="ml-1 mt-1 flex flex-col items-center gap-0.5"><i className="h-px w-1.5 bg-black" /><Caret /></button>
        <span className="flex-1 text-center">NX 12 - Modeling</span>
        <span className="mr-[15px] text-xs font-bold leading-4 text-[#0b8a90]">SIEMENS</span>
      </div>

      <nav className="flex h-[23px] shrink-0 items-center overflow-hidden bg-[#dadada] text-[11px]">
        <div className="h-full w-[300px] shrink-0">
          <button className="h-full w-[60px] bg-[#4b98b8] pl-[15px] text-left text-[#e2f1f7]">File</button>
        </div>
        <button className={`${tabBtn} w-[118px]`}>Polygon Modeling</button>
        <button className={`${tabBtn} w-[63px]`}>Analysis</button>
        <button className={`${tabBtn} w-12`}>View</button>
        <button className={`${tabBtn} w-[59px]`}>Render</button>
        <button className={`${tabBtn} w-[52px]`}>Tools</button>
        <button className={`${tabBtn} w-20`}>Application</button>
        <div className="ml-[7px] flex h-4 w-[99px] shrink-0 items-center border border-[#adadad] bg-white pl-[3px]">
          <input aria-label="Find a Command" placeholder="Find a Command" className="w-[80px] min-w-0 bg-transparent text-[10px] placeholder:text-[#9d9d9d]" />
          <Search className="size-[13px] -scale-x-100 text-[#444]" strokeWidth={2} />
        </div>
        <button aria-label="Full screen" className="ml-[9px] size-[13px] shrink-0 rounded-sm border-2 border-[#666]" />
      </nav>

      <div className="flex h-[76px] shrink-0 overflow-hidden border-b border-[#dcdcdc]">
        <Group w="w-[345px]">
          <div className="flex w-[308px] flex-col gap-[7px] pl-[10px] pt-[6px]">
            <button aria-label="Sketch" className="size-[22px]">
              <Ico s="size-[22px]">
                <path d="M1 2 10 4V15L1 12ZM3 4V7L5 7.500V5ZM3 9V12H6V9ZM7 6V12" stroke="#777a74" fill="#f1f2ee" strokeWidth="1.100" />
                <path d="M13 0 14 4 16 4 14 6 15 9 12 7 9 9 10 6 8 4 12 4Z" fill="#f4e050" />
              </Ico>
            </button>
            <button aria-label="Finish Sketch" className="flex size-[22px] items-center justify-center border border-[#4a9ad8] bg-linear-to-b from-[#b4d6f2] to-[#4fb0f0]"><FlagIcon s="size-[19px]" /></button>
          </div>
          <More icon={<MoreSketchIcon />} />
        </Group>
        <Sep />
        <Group w="w-[240px]" title="Feature">
          <div className="flex w-[104px] flex-col pl-[10px] pt-0.5">
            <Tool icon={<DatumPlaneIcon />} label="Datum Plane" caret />
            <Tool icon={<ExtrudeIcon />} label="Extrude" caret />
            <Tool icon={<HoleIcon />} label="Hole" />
          </div>
          <div className="flex w-[30px] flex-col pt-0.5">
            <Tool icon={<PatternIcon />} name="Pattern Feature" />
            <Tool icon={<UniteIcon />} name="Unite" caret />
            <Tool icon={<ShellIcon />} name="Shell" />
          </div>
          <Big icon={<EdgeBlendIcon />} a="Edge" b="Blend" caret />
          <div className="ml-1 flex w-[15px] flex-col pt-0.5">
            <Tool icon={<ChamferIcon />} name="Chamfer" />
            <Tool icon={<TrimBodyIcon />} name="Trim Body" />
            <Tool icon={<DraftIcon />} name="Draft" />
          </div>
          <div className="ml-2 flex"><More icon={<FeatureMoreIcon />} /></div>
        </Group>
        <Sep />
        <Group w="w-[107px]" title="Synchronous Mod...">
          <div className="ml-1 flex"><Big icon={<MoveFaceIcon />} a="Move" b="Face" /></div>
          <div className="ml-0.5 flex w-[15px] flex-col pt-0.5">
            <Tool icon={<SyncCube><path d="M8 8H14V14H8ZM10 6H15V11" fill="#fff" stroke="#333" /></SyncCube>} name="Copy Face" />
            <Tool icon={<SyncCube><path d="M8 12H14V15H8ZM9 7H14V10H9Z" fill="#fff" stroke="#333" /></SyncCube>} name="Offset Region" />
            <Tool icon={<SyncCube><path d="M8 8 15 15M15 8 8 15" stroke="#333" strokeWidth="1.500" /></SyncCube>} name="Delete Face" />
          </div>
          <div className="ml-[9px] flex"><More icon={<RefreshIcon />} /></div>
        </Group>
        <Sep />
        <Group w="w-[43px]" caret={false}>
          <button className="flex w-full flex-col items-center pt-[11px]">
            <SurfaceIcon />
            <span className="mt-[5px]">Surface</span>
            <span className="mt-1 flex"><Caret /></span>
          </button>
        </Group>
        <Sep />
        <Group w="w-[73px]" title="Assemblies">
          <div className="flex w-[50px] flex-col gap-[9px] pl-[11px] pt-[9px]">
            <button aria-label="Assembly window"><AsmWindowIcon /></button>
            <button aria-label="Add component" className="flex items-center gap-[7px]"><AsmAddIcon /><Caret /></button>
          </div>
          <div className="flex flex-col pt-0.5">
            <Tool icon={<MirrorAsmIcon />} name="Mirror Assembly" />
            <Tool icon={<MoveCompIcon />} name="Move Component" />
            <Tool icon={<PatternCompIcon />} name="Pattern Component" />
          </div>
        </Group>
        <Sep />
        <Group w="w-[54px]" title="Analysis" caret={false}>
          <button className="flex w-[60px] shrink-0 flex-col items-center pt-1"><MeasureIcon /><span className="mt-[7px]">Measure</span></button>
        </Group>
      </div>

      <SelectionBar />

      <main className="flex min-h-0 flex-1">
        <aside className="flex w-[27px] shrink-0 flex-col border-r border-[#a8a8a8] bg-[#d9d9d9]">
          <button aria-label="Settings" className={`${resBtn} mb-4 h-[22px] pr-1`}><Settings className="size-[13px]" strokeWidth={2.5} /></button>
          <button aria-label="Assembly Navigator" className={`${resBtn} h-9`}><AsmNavIcon /></button>
          <button aria-label="Constraint Navigator" className={`${resBtn} h-9`}><MirrorAsmIcon s="size-[21px]" /></button>
          <button aria-label="Part Navigator" className={`${resBtn} -mr-px ml-0.5 h-[39px] bg-[#fdfdfd]`}><PartNavIcon /></button>
          <button aria-label="Reuse Library" className={`${resBtn} mb-1.5 h-9`}><BooksIcon /></button>
          <button aria-label="HD3D Tools" className={`${resBtn} h-12`}><InfoIcon /></button>
          <button aria-label="Web Browser" className={`${resBtn} h-[46px]`}><DocIcon /></button>
          <button aria-label="History" className={`${resBtn} h-12`}><ClockIcon /></button>
          <button aria-label="Roles" className={`${resBtn} h-7`}><RolesIcon /></button>
          <button aria-label="System Scenes" className={`${resBtn} h-12`}><SceneIcon /></button>
        </aside>
        <Navigator />
        <div className="flex min-w-0 flex-1 flex-col">
          <div className="h-[17px] shrink-0 bg-[#fdfdfd]" />
          <div className="min-h-0 flex-1 border-t-2 border-[#4390ae] bg-linear-to-b from-[#b4b5b7] via-[#cfd1d3] via-50% to-[#e3e6e7] to-80%">
            <Sketch />
          </div>
        </div>
      </main>

      <Dialog />
    </div>
  );
}
